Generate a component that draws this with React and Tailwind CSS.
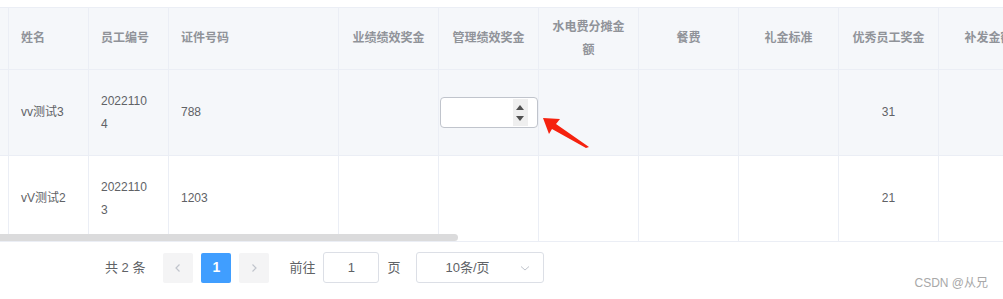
import React from 'react';

const font = { fontFamily: '"Liberation Sans", "Noto Sans CJK SC", sans-serif' };

const columns = [
    { key: 'pad', label: '', w: 'w-[9px]', align: 'left' },
    { key: 'name', label: '姓名', w: 'w-[80px]', align: 'left' },
    { key: 'no', label: '员工编号', w: 'w-[80px]', align: 'left' },
    { key: 'idc', label: '证件号码', w: 'w-[170px]', align: 'left' },
    { key: 'perf', label: '业绩绩效奖金', w: 'w-[100px]', align: 'center' },
    { key: 'mgmt', label: '管理绩效奖金', w: 'w-[100px]', align: 'center' },
    { key: 'util', label: '水电费分摊金额', w: 'w-[100px]', align: 'center' },
    { key: 'meal', label: '餐费', w: 'w-[100px]', align: 'center' },
    { key: 'gift', label: '礼金标准', w: 'w-[100px]', align: 'center' },
    { key: 'best', label: '优秀员工奖金', w: 'w-[100px]', align: 'center' },
    { key: 'extra', label: '补发金额', w: 'w-[100px]', align: 'center' },
];

const rows = [
    { name: 'vv测试3', no: '20221104', idc: '788', best: '31', hover: true },
    { name: 'vV测试2', no: '20221103', idc: '1203', best: '21', hover: false },
];

const NumberInput = () => (
    <div className="w-[98px] h-[31px] rounded-[4px] border border-[#c0c4cc] bg-white flex items-stretch justify-end pr-[9px] py-[1px]">
        <div className="w-[15px] bg-[#efefef] flex flex-col items-center justify-center gap-[6px]">
            <div className="w-0 h-0 border-l-[4px] border-r-[4px] border-b-[5px] border-l-transparent border-r-transparent border-b-[#505050]" />
            <div className="w-0 h-0 border-l-[4px] border-r-[4px] border-t-[5px] border-l-transparent border-r-transparent border-t-[#505050]" />
        </div>
    </div>
);

const Cell = ({ col, children, className = '' }) => (
    <div
        className={`${col.w} shrink-0 border-r border-[#ebeef5] flex items-center ${col.align === 'center' ? 'justify-center text-center' : 'justify-start'} ${className}`}
    >
        {children}
    </div>
);

export default function App() {
    return (
        <div className="relative w-[1003px] h-[299px] bg-white overflow-hidden text-[12px]" style={font}>
            <div className="pt-[7px]">
                {/* Table */}
                <div className="relative w-[1003px] overflow-hidden border-t border-[#ebeef5]">
                    <div className="w-[1100px]">
                        {/* Header */}
                        <div className="flex h-[62px] bg-[#f5f7fa] border-b border-[#ebeef5] font-bold text-[#909399] leading-[23px]">
                            {columns.map((col) => (
                                <Cell key={col.key} col={col} className={col.key === 'pad' ? '' : col.align === 'left' ? 'pl-[12px]' : 'px-[10px]'}>
                                    {col.key === 'util' ? (
                                        <span className="block whitespace-nowrap">水电费分摊金<br />额</span>
                                    ) : (
                                        <span className="whitespace-nowrap">{col.label}</span>
                                    )}
                                </Cell>
                            ))}
                        </div>
                        {/* Body */}
                        {rows.map((r, i) => (
                            <div
                                key={i}
                                className={`flex h-[86px] border-b border-[#ebeef5] text-[#606266] leading-[23px] ${r.hover ? 'bg-[#f5f7fa]' : 'bg-white'}`}
                            >
                                {columns.map((col) => {
                                    let content = null;
                                    if (col.key === 'name') content = <span className="pl-[12px]">{r.name}</span>;
                                    if (col.key === 'no') content = <span className="pl-[12px] w-[62px] break-all">{r.no}</span>;
                                    if (col.key === 'idc') content = <span className="pl-[12px]">{r.idc}</span>;
                                    if (col.key === 'best') content = <span>{r.best}</span>;
                                    if (col.key === 'mgmt' && r.hover) content = <NumberInput />;
                                    return (
                                        <Cell key={col.key} col={col}>
                                            {content}
                                        </Cell>
                                    );
                                })}
                            </div>
                        ))}
                    </div>
                    {/* Horizontal scrollbar */}
                    <div className="absolute left-0 bottom-[1px] w-[458px] h-[7px] rounded-r-full bg-[#dbdbdc]" />
                </div>

                {/* Pagination */}
                <div className="flex items-center h-[31px] mt-[10px] pl-[105px] text-[13px] text-[#606266]">
                    <span className="mr-[18px] whitespace-pre">共 2 条</span>
                    <div className="w-[30px] h-[30px] rounded-[2px] bg-[#f4f4f5] flex items-center justify-center text-[#c0c4cc]">
                        <svg width="10" height="10" viewBox="0 0 10 10" fill="none" stroke="currentColor" strokeWidth="1.2"><path d="M6.5 1.5 3 5l3.5 3.5" /></svg>
                    </div>
                    <div className="w-[30px] h-[30px] ml-[8px] rounded-[2px] bg-[#409eff] flex items-center justify-center text-white font-bold text-[14px]">1</div>
                    <div className="w-[30px] h-[30px] ml-[8px] rounded-[2px] bg-[#f4f4f5] flex items-center justify-center text-[#c0c4cc]">
                        <svg width="10" height="10" viewBox="0 0 10 10" fill="none" stroke="currentColor" strokeWidth="1.2"><path d="M3.5 1.5 7 5 3.5 8.5" /></svg>
                    </div>
                    <span className="ml-[20px]">前往</span>
                    <div className="ml-[8px] w-[56px] h-[31px] rounded-[3px] border border-[#dcdfe6] flex items-center justify-center">1</div>
                    <span className="ml-[8px]">页</span>
                    <div className="ml-[15px] w-[128px] h-[31px] rounded-[3px] border border-[#dcdfe6] flex items-center pl-[29px] pr-[12px] justify-between">
                        <span>10条/页</span>
                        <svg width="12" height="12" viewBox="0 0 12 12" fill="none" stroke="#c0c4cc" strokeWidth="1"><path d="M2 4.5 6 8l4-3.5" /></svg>
                    </div>
                </div>
            </div>

            {/* Annotation arrow */}
            <svg className="absolute left-0 top-0 pointer-events-none" width="1003" height="299">
                <polygon points="543,118 560,119 556,124 589,147 586,148 552,129 549,134" fill="#f5220f" />
            </svg>

            {/* Watermark */}
            <div className="absolute right-[15px] top-[276px] text-[12px] text-[#a8a8a8] leading-[14px]">CSDN @从兄</div>
        </div>
    );
}
